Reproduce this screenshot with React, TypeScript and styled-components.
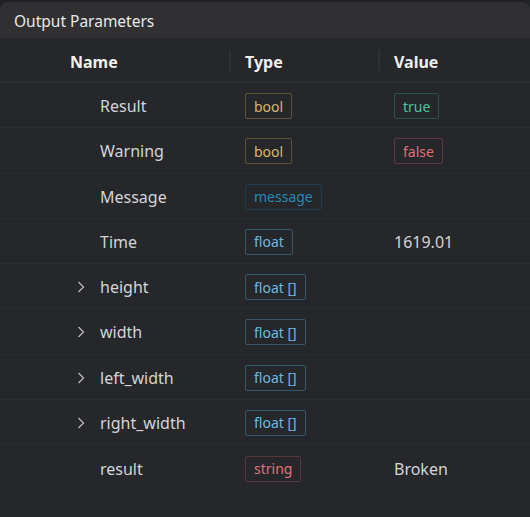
import React from "react";
import styled, { createGlobalStyle } from "styled-components";

type Kind = "bool" | "message" | "float" | "string" | "true" | "false";

type Param = {
  name: string;
  type: string;
  kind: Kind;
  expandable?: boolean;
  value?: string;
  valueKind?: Kind;
};

const params: Param[] = [
  { name: "Result", type: "bool", kind: "bool", value: "true", valueKind: "true" },
  { name: "Warning", type: "bool", kind: "bool", value: "false", valueKind: "false" },
  { name: "Message", type: "message", kind: "message" },
  { name: "Time", type: "float", kind: "float", value: "1619.01" },
  { name: "height", type: "float []", kind: "float", expandable: true },
  { name: "width", type: "float []", kind: "float", expandable: true },
  { name: "left_width", type: "float []", kind: "float", expandable: true },
  { name: "right_width", type: "float []", kind: "float", expandable: true },
  { name: "result", type: "string", kind: "string", value: "Broken" },
];

const palette: Record<Kind, { fg: string; border: string }> = {
  bool: { fg: "#d9b56e", border: "#5f5239" },
  true: { fg: "#45c79c", border: "#2c5347" },
  false: { fg: "#e0717a", border: "#5d393d" },
  message: { fg: "#1f8cb4", border: "#1d3d4e" },
  float: { fg: "#6db8e2", border: "#35566b" },
  string: { fg: "#e0717a", border: "#563639" },
};

const GlobalStyle = createGlobalStyle`
  html, body {
    margin: 0;
    padding: 0;
    background: #1f2024;
  }
  body {
    font-family: "Noto Sans", "Open Sans", sans-serif;
  }
`;

export default function App() {
  return (
    <>
      <GlobalStyle />
      <Panel>
        <PanelHeader>Output Parameters</PanelHeader>
        <Table>
          <HeadRow>
            <HeadCell>Name</HeadCell>
            <HeadCell divider>Type</HeadCell>
            <HeadCell divider>Value</HeadCell>
          </HeadRow>
          {params.map((p) => (
            <Row key={p.name}>
              <NameCell>
                <Toggle>{p.expandable ? <Chevron /> : null}</Toggle>
                {p.name}
              </NameCell>
              <Cell>
                <Badge kind={p.kind}>{p.type}</Badge>
              </Cell>
              <Cell>
                {p.value && p.valueKind ? (
                  <Badge kind={p.valueKind}>{p.value}</Badge>
                ) : p.value ? (
                  <Plain>{p.value}</Plain>
                ) : null}
              </Cell>
            </Row>
          ))}
        </Table>
      </Panel>
    </>
  );
}

const Chevron = () => (
  <svg width="8" height="12" viewBox="0 0 8 12" fill="none">
    <path d="M1.5 1 L6.5 6 L1.5 11" stroke="#b9b9bb" strokeWidth="1.3" />
  </svg>
);

const Panel = styled.div`
  width: 530px;
  height: 517px;
  padding-top: 2px;
  box-sizing: border-box;
  background: #1f2024;
  display: flex;
  flex-direction: column;
`;

const PanelHeader = styled.div`
  height: 36px;
  box-sizing: border-box;
  padding: 2px 0 0 14px;
  display: flex;
  align-items: center;
  background: #303032;
  border-radius: 7px 7px 0 0;
  color: #e8e8e8;
  font-size: 15.5px;
`;

const Table = styled.div`
  flex: 1;
  background: #26272b;
  display: flex;
  flex-direction: column;
`;

const columns = "229px 149px 1fr";

const HeadRow = styled.div`
  display: grid;
  grid-template-columns: ${columns};
  height: 45px;
  box-sizing: border-box;
  border-bottom: 1px solid #2f3034;
`;

const HeadCell = styled.div<{ divider?: boolean }>`
  position: relative;
  display: flex;
  align-items: center;
  padding-top: 3px;
  padding-left: ${({ divider }) => (divider ? "16px" : "70px")};
  color: #f0f0f0;
  font-weight: 700;
  font-size: 16px;

  &::before {
    content: "";
    display: ${({ divider }) => (divider ? "block" : "none")};
    position: absolute;
    left: 0;
    top: 12px;
    bottom: 11px;
    width: 2px;
    background: #303135;
  }
`;

const Row = styled.div`
  display: grid;
  grid-template-columns: ${columns};
  height: 45.25px;
  box-sizing: border-box;
  padding-top: 2px;
  border-bottom: 1px solid #2c2d31;

  &:last-child {
    border-bottom: none;
  }
`;

const NameCell = styled.div`
  display: flex;
  align-items: center;
  padding-left: 77px;
  color: #d4d4d6;
  font-size: 16px;
`;

const Toggle = styled.span`
  width: 23px;
  display: flex;
  align-items: center;
`;

const Cell = styled.div`
  display: flex;
  align-items: center;
  padding-left: 16px;
`;

const Badge = styled.span<{ kind: Kind }>`
  display: inline-flex;
  align-items: center;
  height: 26px;
  box-sizing: border-box;
  padding: 0 8px;
  border: 1px solid ${({ kind }) => palette[kind].border};
  border-radius: 2px;
  color: ${({ kind }) => palette[kind].fg};
  font-size: 14px;
`;

const Plain = styled.span`
  color: #d4d4d6;
  font-size: 16px;
`;
